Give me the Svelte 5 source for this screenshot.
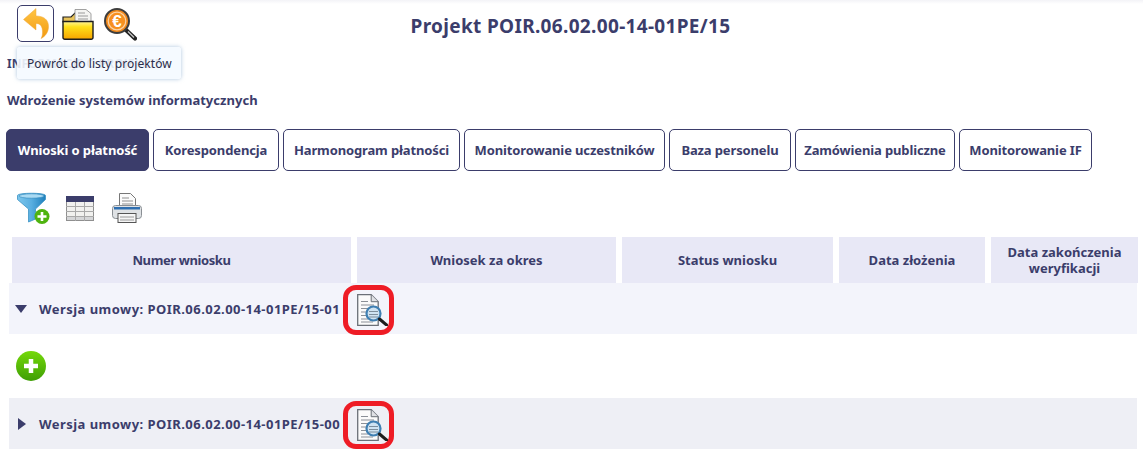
<script>
  const tabs = [
    { label: "Wnioski o płatność", width: 143 },
    { label: "Korespondencja", width: 126 },
    { label: "Harmonogram płatności", width: 177 },
    { label: "Monitorowanie uczestników", width: 201 },
    { label: "Baza personelu", width: 122 },
    { label: "Zamówienia publiczne", width: 160 },
    { label: "Monitorowanie IF", width: 133 },
  ];
  const columns = ["Numer wniosku", "Wniosek za okres", "Status wniosku", "Data złożenia", "Data zakończenia weryfikacji"];
</script>

{#snippet docIcon()}
  <span class="mark">
    <svg width="31" height="32" viewBox="0 0 31 32">
      <path d="M.7.7h13.500l7 7v23.600H.7z" fill="#fbfbfb" stroke="#6b7078" stroke-width="1.300" />
      <path d="M14.200.7v7h7" fill="#dfe1e5" stroke="#6b7078" stroke-width="1" />
      <path d="M4 7.500h7M4 11h13M4 14.500h8M4 18h6M4 21.500h6M4 25h7M4 28h12" stroke="#8b9097" stroke-width="1.200" />
      <circle cx="16.500" cy="19.500" r="7" fill="#cfe3f2" stroke="#3f7fb2" stroke-width="2.200" />
      <path d="M12 17.500h9M12 20.500h9M12 23h9" stroke="#7d8e9c" stroke-width="1.200" />
      <path d="M22.500 25l7 6" stroke="#1d1d1d" stroke-width="3" stroke-linecap="round" />
    </svg>
  </span>
{/snippet}

<div class="page">
  <header class="top">
    <div class="tools">
      <button class="back" aria-label="Powrót">
        <svg width="26" height="31" viewBox="0 0 26 31">
          <defs>
            <linearGradient id="arrow" x1="0" y1="0" x2="0" y2="1">
              <stop offset="0" stop-color="#ffc545" />
              <stop offset="1" stop-color="#f29a10" />
            </linearGradient>
          </defs>
          <path d="M13 .5L.5 11.500 13 22v-6.500c4.500 0 6.500 3 6.500 8.500 0 3-.5 5-1.500 6.500 4-2 7.500-6 7.500-12 0-7-5-10.500-12.500-10.500z" fill="url(#arrow)" stroke="#f0a93a" stroke-width=".5" />
        </svg>
      </button>
      <svg class="folder" width="32" height="32" viewBox="0 0 32 32">
        <defs>
          <linearGradient id="fold" x1="0" y1="0" x2="0" y2="1">
            <stop offset="0" stop-color="#fff59a" />
            <stop offset=".3" stop-color="#ffe01a" />
            <stop offset="1" stop-color="#f7a400" />
          </linearGradient>
        </defs>
        <path d="M1 14V9h8l4-4h2v9z" fill="#e8c35a" stroke="#1d1d1d" stroke-width="1.200" />
        <path d="M13 13V1.500h11l5 4V15z" fill="#f4f4f2" stroke="#8a8a8a" stroke-width=".8" />
        <path d="M16 5h7M16 8h10M16 11h10M16 13.500h10" stroke="#9a9a9a" stroke-width="1" />
        <path d="M1 13.500h30v16a1.800 1.800 0 0 1-1.800 1.800H2.800A1.800 1.800 0 0 1 1 29.500z" fill="url(#fold)" stroke="#1d1d1d" stroke-width="1.400" />
      </svg>
      <svg class="euro" width="33" height="33" viewBox="0 0 33 33">
        <path d="M22 22l9 8.500" stroke="#222" stroke-width="4.200" stroke-linecap="round" />
        <path d="M24 23.500l6 6" stroke="#c9c9c9" stroke-width="1.200" />
        <circle cx="13" cy="13" r="12" fill="#f28a1c" stroke="#3d3d3d" stroke-width="2" />
        <circle cx="13" cy="13" r="8.800" fill="#f7901f" stroke="#fbd3a6" stroke-width="1.200" />
        <text x="13" y="19" text-anchor="middle" class="euro-sign">€</text>
      </svg>
    </div>
    <h1>Projekt POIR.06.02.00-14-01PE/15</h1>
    <div class="tooltip">Powrót do listy projektów</div>
  </header>

  <div class="info">INFORMACJE O PROJEKCIE</div>
  <div class="name">Wdrożenie systemów informatycznych</div>

  <nav class="tabs">
    {#each tabs as tab, i}
      <button class="tab" class:active={i === 0} style="width: {tab.width}px">{tab.label}</button>
    {/each}
  </nav>

  <div class="actions">
    <svg width="33" height="32" viewBox="0 0 33 32">
      <defs>
        <linearGradient id="fun" x1="0" y1="0" x2="1" y2="0">
          <stop offset="0" stop-color="#7cc6ec" />
          <stop offset=".5" stop-color="#58aee0" />
          <stop offset="1" stop-color="#1e7fbc" />
        </linearGradient>
      </defs>
      <path d="M.5 3.500C.5.500 28.500.500 28.500 3.500v4L18.500 17v10l-7 3V17L.5 7.500z" fill="url(#fun)" stroke="#3b93c4" stroke-width=".8" />
      <ellipse cx="14.500" cy="4" rx="12.500" ry="2.200" fill="#a9daf3" stroke="#2f86bb" stroke-width=".6" />
      <circle cx="25" cy="24.500" r="7.500" fill="#4fb30f" />
      <path d="M25 20v9M20.500 24.500h9" stroke="#fff" stroke-width="2.600" />
    </svg>
    <svg width="28" height="25" viewBox="0 0 28 25">
      <rect x=".5" y=".5" width="27" height="24" fill="#f1f1ef" stroke="#8f8f8f" />
      <rect width="28" height="6" fill="#3b3d6b" />
      <rect x="1" y="20" width="26" height="4" fill="#d5d6d8" />
      <path d="M0 10.500h28M0 15.500h28M0 20.500h28M9.500 6v19M18.500 6v19" stroke="#a9a9a9" />
    </svg>
    <svg width="30" height="30" viewBox="0 0 30 30">
      <path d="M7.500.5h11l5 5v11h-16z" fill="#fbfbfb" stroke="#777" />
      <path d="M10 5h7M10 8h11M10 11h11M10 14h11" stroke="#8f8f8f" />
      <rect x=".5" y="12.500" width="29" height="13" rx="3" fill="#dfe2e5" stroke="#8a8f94" />
      <rect x="2" y="14" width="26" height="2.500" fill="#2f6fb0" />
      <rect x="6" y="20.500" width="18" height="9" fill="#f5f5f5" stroke="#555" />
      <path d="M8 24h14M8 27h14" stroke="#999" />
    </svg>
  </div>

  <section class="grid">
    <div class="head">
      {#each columns as col}
        <div class="cell">{col}</div>
      {/each}
    </div>

    <div class="row first">
      <span class="tri down"></span>
      <span class="label">Wersja umowy: POIR.06.02.00-14-01PE/15-01</span>
      {@render docIcon()}
    </div>

    <div class="add">
      <svg width="30" height="30" viewBox="0 0 30 30">
        <defs>
          <linearGradient id="plus" x1="0" y1="0" x2="0" y2="1">
            <stop offset="0" stop-color="#74d90a" />
            <stop offset="1" stop-color="#3f9e05" />
          </linearGradient>
        </defs>
        <circle cx="15" cy="15" r="15" fill="url(#plus)" />
        <path d="M15 8v14M8 15h14" stroke="#fff" stroke-width="4.500" />
      </svg>
    </div>

    <div class="row second">
      <span class="tri right"></span>
      <span class="label">Wersja umowy: POIR.06.02.00-14-01PE/15-00</span>
      {@render docIcon()}
    </div>
  </section>
</div>

<style>
  :global(body) {
    background: #fff;
  }
  .page {
    height: 461px;
    overflow: hidden;
    font-family: "Noto Sans", "DejaVu Sans", sans-serif;
    color: #3b3d6b;
    font-weight: 700;
    font-size: 13px;
  }
  .top {
    position: relative;
    display: flex;
    justify-content: center;
    height: 55px;
    background: linear-gradient(#f3f3f7, #fff 4px);
  }
  .tools {
    position: absolute;
    left: 17px;
    top: 5px;
    display: flex;
    gap: 8px;
    align-items: flex-start;
  }
  .back {
    width: 37px;
    height: 37px;
    padding: 0;
    display: flex;
    align-items: center;
    justify-content: center;
    background: #fff;
    border: 1px solid #3b3d6b;
    border-radius: 5px;
  }
  .folder,
  .euro {
    margin-top: 3px;
  }
  .euro {
    margin-left: 2px;
  }
  .euro-sign {
    font-size: 17px;
    fill: #fff;
    font-weight: 700;
    font-family: "Liberation Sans", sans-serif;
  }
  h1 {
    margin: 14px 0 0;
    padding-right: 2px;
    font-size: 19px;
    line-height: 24px;
    font-weight: 700;
    letter-spacing: 0.33px;
  }
  .tooltip {
    position: absolute;
    left: 17px;
    top: 47px;
    width: 164px;
    height: 32px;
    box-sizing: border-box;
    padding: 8px 10px;
    line-height: 17px;
    font-size: 12px;
    font-weight: 400;
    letter-spacing: 0.08px;
    color: #2b2d4a;
    background: rgba(244, 249, 255, 0.9);
    border-radius: 3px;
    box-shadow: 0 0 4px rgba(120, 160, 200, 0.6);
    white-space: nowrap;
    z-index: 2;
  }
  .info {
    margin-left: 7px;
    line-height: 18px;
    font-size: 12px;
    white-space: nowrap;
  }
  .name {
    margin: 19px 0 0 7px;
    line-height: 16px;
    letter-spacing: 0.03px;
  }
  .tabs {
    display: flex;
    gap: 4px;
    margin: 21px 0 0 6px;
  }
  .tab {
    height: 42px;
    padding: 0;
    font: inherit;
    letter-spacing: -0.13px;
    color: inherit;
    background: #fff;
    border: 1px solid #3b3d6b;
    border-radius: 5px;
    white-space: nowrap;
  }
  .tab.active {
    color: #fff;
    background: #3b3d6b;
  }
  .actions {
    display: flex;
    align-items: center;
    gap: 16px;
    margin: 18px 0 0 17px;
    height: 38px;
  }
  .actions svg:last-child {
    margin-left: 2px;
  }
  .grid {
    margin-top: 10px;
  }
  .head {
    display: grid;
    grid-template-columns: 339px 259px 211px 146px 147px;
    gap: 6px;
    margin-left: 12px;
    height: 46px;
  }
  .cell {
    display: flex;
    align-items: center;
    justify-content: center;
    text-align: center;
    line-height: 16px;
    background: #e8e8f6;
  }
  .cell:first-child {
    letter-spacing: -0.4px;
  }
  .row {
    display: flex;
    align-items: center;
    margin-left: 9px;
    width: 1128px;
    height: 51px;
  }
  .first {
    background: #f3f4fb;
  }
  .second {
    background: #eeeff5;
  }
  .tri {
    width: 0;
    height: 0;
    flex: none;
  }
  .tri.down {
    margin: 0 12px 0 6px;
    border-left: 6px solid transparent;
    border-right: 6px solid transparent;
    border-top: 8px solid #3b3d6b;
  }
  .tri.right {
    margin: 0 13px 0 9px;
    border-top: 6px solid transparent;
    border-bottom: 6px solid transparent;
    border-left: 8px solid #3b3d6b;
  }
  .label {
    width: 304px;
    flex: none;
    white-space: nowrap;
    letter-spacing: 0.46px;
  }
  .mark {
    box-sizing: border-box;
    width: 51px;
    height: 50px;
    margin-top: 3px;
    padding-left: 7px;
    display: flex;
    align-items: center;
    justify-content: center;
    flex: none;
    border: 5px solid #ee1c25;
    border-radius: 13px;
  }
  .second .mark {
    height: 48px;
  }
  .add {
    height: 64px;
    display: flex;
    align-items: center;
    padding-left: 16px;
  }
</style>
